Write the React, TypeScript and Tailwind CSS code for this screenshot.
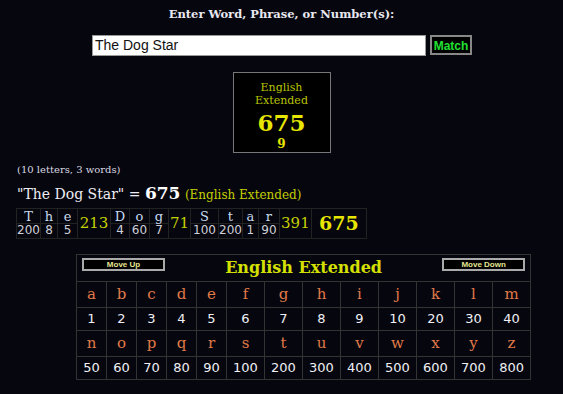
import React from "react";

const serif = "font-['DejaVu_Serif','Liberation_Serif',serif]";
const sans = "font-['DejaVu_Sans','Liberation_Sans',sans-serif]";

const words = [
  { letters: [["T", 200, "w-[24px]"], ["h", 8, "w-[17px]"], ["e", 5, "w-[20px]"]], total: 213, tw: "w-[33px]" },
  { letters: [["D", 4, "w-[19px]"], ["o", 60, "w-[20px]"], ["g", 7, "w-[19px]"]], total: 71, tw: "w-[22px]" },
  {
    letters: [["S", 100, "w-[28px]"], ["t", 200, "w-[22px]"], ["a", 1, "w-[16px]"], ["r", 90, "w-[21px]"]],
    total: 391,
    tw: "w-[32px]",
  },
];

const rowA = ["a", "b", "c", "d", "e", "f", "g", "h", "i", "j", "k", "l", "m"];
const valA = [1, 2, 3, 4, 5, 6, 7, 8, 9, 10, 20, 30, 40];
const rowB = ["n", "o", "p", "q", "r", "s", "t", "u", "v", "w", "x", "y", "z"];
const valB = [50, 60, 70, 80, 90, 100, 200, 300, 400, 500, 600, 700, 800];

export default function App() {
  return (
    <div className={`min-h-[394px] w-[563px] bg-[#06060f] text-white ${serif}`}>
      <div className="pt-[6px] text-center text-[11.5px] font-bold text-[#e8e8f0]">
        Enter Word, Phrase, or Number(s):
      </div>

      <div className="mt-[12px] flex justify-center gap-[4px] pl-[1px]">
        <div className="flex h-[21px] w-[334px] items-center border border-[#999] bg-white px-[2px] text-[14px] text-[#111] font-['Liberation_Sans',sans-serif]">
          The Dog Star
        </div>
        <button className="h-[20px] w-[42px] border-2 border-[#888] bg-black text-[12px] font-bold text-[#22e033] font-['Liberation_Sans',sans-serif]">
          Match
        </button>
      </div>

      <div className="mt-[16px] flex justify-center">
        <div className="flex h-[81px] w-[98px] flex-col items-center border border-[#777] bg-black pt-[8px]">
          <div className="text-[11px] leading-[13px] text-[#b8c400]">English</div>
          <div className="text-[11px] leading-[13px] text-[#b8c400]">Extended</div>
          <div className="mt-[3px] text-[23px] font-bold leading-[26px] text-[#e6e600]">675</div>
          <div className="text-[12px] font-bold leading-[16px] text-[#e6e600]">9</div>
        </div>
      </div>

      <div className="mt-[9px] pl-[17px] text-[10px] text-[#d8d8e0]">(10 letters, 3 words)</div>

      <div className="mt-[6px] pl-[17px] text-[14px] leading-[20px] text-[#eeeef4]">
        "The Dog Star" = <span className="text-[17px] font-bold text-white">675</span>{" "}
        <span className="text-[12px] text-[#c4d000]">(English Extended)</span>
      </div>

      <div className="pl-[16px] pt-[3px]">
        <table className="border-collapse">
          <tbody>
            <tr>
              {words.map((w, wi) => (
                <React.Fragment key={wi}>
                  {w.letters.map(([l, , cw], li) => (
                    <td
                      key={li}
                      className={`${cw} h-[14px] border border-[#222] p-0 text-center text-[13px] leading-[13px] text-[#c8dcf0]`}
                    >
                      {l}
                    </td>
                  ))}
                  <td
                    rowSpan={2}
                    className={`${w.tw} border border-[#222] p-0 text-center text-[15px] text-[#c4d000]`}
                  >
                    {w.total}
                  </td>
                </React.Fragment>
              ))}
              <td
                rowSpan={2}
                className="w-[55px] border border-[#222] p-0 text-center text-[19px] font-bold text-[#e6e600]"
              >
                675
              </td>
            </tr>
            <tr>
              {words.map((w, wi) =>
                w.letters.map(([, v], li) => (
                  <td
                    key={`${wi}-${li}`}
                    className={`h-[14px] border border-[#222] p-0 text-center text-[12px] leading-[13px] text-[#d0d0d8] ${sans}`}
                  >
                    {v}
                  </td>
                ))
              )}
            </tr>
          </tbody>
        </table>
      </div>

      <div className="mt-[15px] pl-[76px]">
        <table className="w-[455px] table-fixed border-collapse border border-[#333]">
          <colgroup>
            {rowA.map((l, i) => (
              <col key={l} className={i < 5 ? "w-[30px]" : "w-[38px]"} />
            ))}
          </colgroup>
          <tbody>
            <tr>
              <td colSpan={13} className="h-[27px] border border-[#333] px-[5px] py-0">
                <div className="flex items-start justify-between">
                  <button className="mt-[3px] h-[13px] w-[83px] border-2 border-[#aaa] bg-black text-[8px] font-bold leading-[9px] text-[#e6e690] font-['Liberation_Sans',sans-serif]">
                    Move Up
                  </button>
                  <span className="text-[16px] font-bold leading-[26px] text-[#d4e000]">English Extended</span>
                  <button className="mt-[3px] h-[13px] w-[83px] border-2 border-[#aaa] bg-black text-[8px] font-bold leading-[9px] text-[#e6e690] font-['Liberation_Sans',sans-serif]">
                    Move Down
                  </button>
                </div>
              </td>
            </tr>
            {[
              [rowA, valA],
              [rowB, valB],
            ].map(([letters, vals], ri) => (
              <React.Fragment key={ri}>
                <tr>
                  {(letters as string[]).map((l) => (
                    <td
                      key={l}
                      className="h-[26px] border border-[#333] p-0 text-center text-[15px] text-[#e07a48]"
                    >
                      {l}
                    </td>
                  ))}
                </tr>
                <tr>
                  {(vals as number[]).map((v) => (
                    <td
                      key={v}
                      className={`h-[23px] border border-[#333] p-0 text-center text-[13px] text-[#f0f0f4] ${sans}`}
                    >
                      {v}
                    </td>
                  ))}
                </tr>
              </React.Fragment>
            ))}
          </tbody>
        </table>
      </div>
    </div>
  );
}
